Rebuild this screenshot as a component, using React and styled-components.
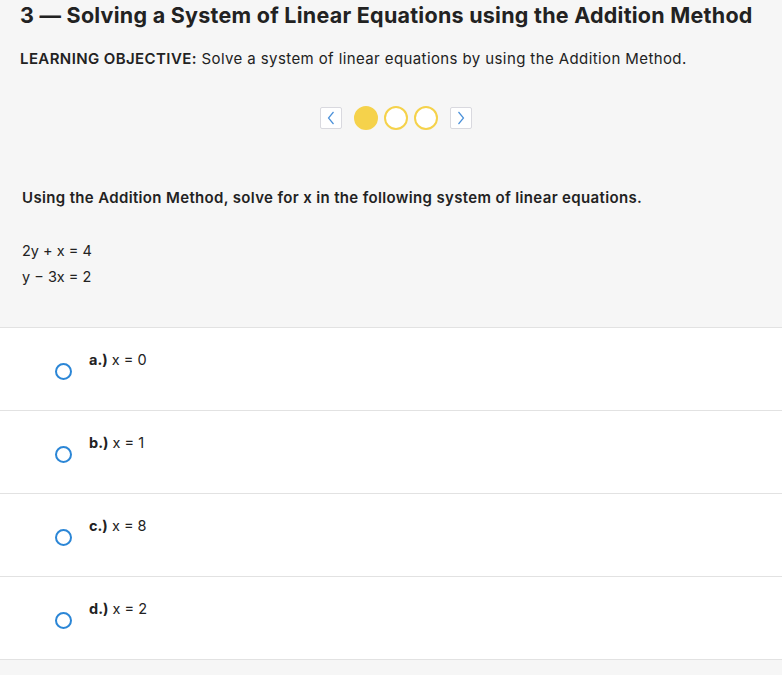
import React from "react"
import styled, { createGlobalStyle } from "styled-components"

const GlobalStyle = createGlobalStyle`
  html, body {
    margin: 0;
    padding: 0;
    background: #f6f6f6;
    font-family: Inter, "Liberation Sans", sans-serif;
    color: #1f1f1f;
  }
`

const options = [
  { letter: "a.)", value: "x = 0" },
  { letter: "b.)", value: "x = 1" },
  { letter: "c.)", value: "x = 8" },
  { letter: "d.)", value: "x = 2" },
]

const Chevron = ({ dir }) => (
  <svg width="10" height="14" viewBox="0 0 10 14">
    <path
      d={dir === "left" ? "M7.5 1 L2.5 7 L7.5 13" : "M2.5 1 L7.5 7 L2.5 13"}
      fill="none"
      stroke="#4a90d9"
      strokeWidth="1.2"
    />
  </svg>
)

const App = () => (
  <Page>
    <GlobalStyle />
    <Header>
      <Title>3 — Solving a System of Linear Equations using the Addition Method</Title>
      <Objective>
        <strong>LEARNING OBJECTIVE:</strong> Solve a system of linear equations by using the
        Addition Method.
      </Objective>
      <Nav>
        <NavButton>
          <Chevron dir="left" />
        </NavButton>
        <Dots>
          <Dot filled />
          <Dot />
          <Dot />
        </Dots>
        <NavButton>
          <Chevron dir="right" />
        </NavButton>
      </Nav>
      <Question>
        Using the Addition Method, solve for x in the following system of linear equations.
      </Question>
      <Equations>
        <div>2y + x = 4</div>
        <div>y − 3x = 2</div>
      </Equations>
    </Header>
    <OptionList>
      {options.map(o => (
        <OptionRow key={o.letter}>
          <Radio />
          <OptionLabel>
            <b>{o.letter}</b> {o.value}
          </OptionLabel>
        </OptionRow>
      ))}
    </OptionList>
  </Page>
)

export default App

const Page = styled.div`
  width: 782px;
  min-height: 675px;
  background: #f6f6f6;
`

const Header = styled.div`
  padding: 0 0 37px 0;
  border-bottom: 1px solid #e2e2e2;
`

const Title = styled.h1`
  margin: 0;
  padding: 1px 0 0 20px;
  font-size: 21.5px;
  font-weight: 700;
  line-height: 28px;
  letter-spacing: 0.25px;
  color: #222;
`

const Objective = styled.p`
  margin: 20px 0 0 20px;
  font-size: 15px;
  line-height: 20px;
  letter-spacing: 0.4px;
  color: #222;
  strong {
    font-weight: 600;
  }
`

const Nav = styled.div`
  display: flex;
  justify-content: center;
  align-items: center;
  gap: 12px;
  margin-top: 37px;
  padding-left: 10px;
`

const NavButton = styled.div`
  width: 20px;
  height: 20px;
  border: 1px solid #d9d9df;
  border-radius: 2px;
  background: #fff;
  display: flex;
  align-items: center;
  justify-content: center;
`

const Dots = styled.div`
  display: flex;
  gap: 6px;
`

const Dot = styled.div`
  width: 20px;
  height: 20px;
  border-radius: 50%;
  border: 2px solid #f5d24b;
  background: ${p => (p.filled ? "#f5d24b" : "#fff")};
`

const Question = styled.p`
  margin: 58px 0 0 22px;
  font-size: 15px;
  font-weight: 600;
  line-height: 20px;
  letter-spacing: 0.35px;
  color: #222;
`

const Equations = styled.div`
  margin: 30px 0 0 22px;
  font-size: 14.5px;
  line-height: 26px;
  color: #222;
`

const OptionList = styled.div`
  background: #fff;
  border-bottom: 1px solid #e2e2e2;
`

const OptionRow = styled.div`
  display: flex;
  align-items: flex-start;
  height: 83px;
  padding: 22px 0 0 55px;
  box-sizing: border-box;
  border-top: 1px solid #e2e2e2;
  &:first-child {
    border-top: none;
    height: 82px;
  }
`

const Radio = styled.div`
  width: 13px;
  height: 13px;
  margin-top: 13px;
  border: 2px solid #2b86d6;
  border-radius: 50%;
  flex-shrink: 0;
`

const OptionLabel = styled.div`
  margin-left: 17px;
  font-size: 14.5px;
  line-height: 20px;
  color: #222;
  b {
    font-weight: 700;
  }
`
